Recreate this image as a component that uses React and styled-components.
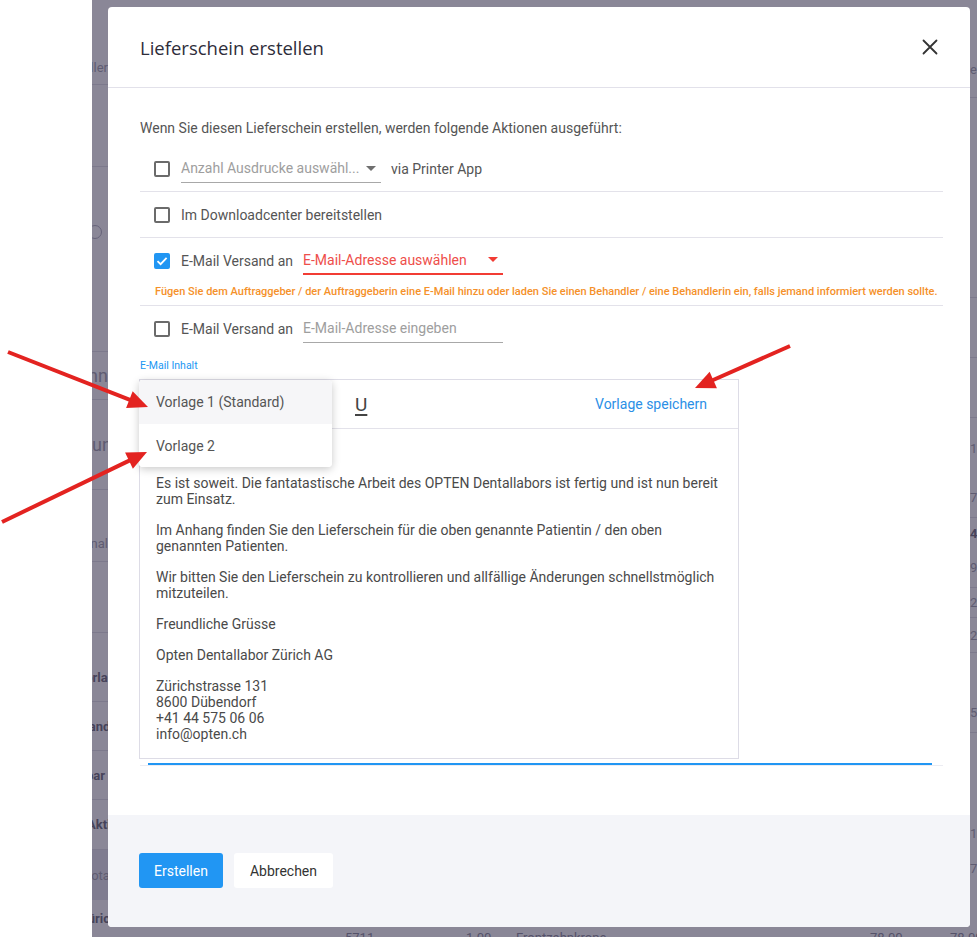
import React from 'react';
import styled, { createGlobalStyle } from 'styled-components';

const GlobalStyle = createGlobalStyle`
  html, body {
    margin: 0;
    padding: 0;
    background: #fff;
  }
  body {
    font-family: Roboto, "Liberation Sans", Arial, sans-serif;
  }
  * {
    box-sizing: border-box;
  }
`;

// bits of the page that lies behind the dimmed overlay, cut by the modal
const leftRows = [
  {h: 51},
  {h: 34, text: 'Besteller', line: true},
  {h: 82, line: true},
  {h: 164, ring: true},
  {h: 21, line: true},
  {h: 48, text: 'Beginn', big: true, line: true},
  {h: 90, text: 'Kunde', big: true, shift: 11, line: true},
  {h: 35},
  {h: 37, text: 'Kanal', line: true},
  {h: 71, line: true},
  {h: 20},
  {h: 49, text: 'Vorlage', bold: true, shift: 15, line: true},
  {h: 49, text: 'Versand', bold: true, shift: 30, line: true},
  {h: 49, text: 'Sichtbar', bold: true, shift: 36, line: true},
  {h: 50, text: 'Aktiv', bold: true, shift: 5, line: true},
  {h: 50, text: 'Total', shift: 8, dark: true},
  {h: 37, text: 'Zürich', bold: true, shift: 12},
];

const rightRows = [
  {h: 60}, {h: 18, text: 'e'}, {h: 20, line: true}, {h: 200, line: true},
  {h: 60, line: true}, {h: 60, line: true}, {h: 60, text: '1'}, {h: 40, text: '7', line: true},
  {h: 30, text: '4', bold: true}, {h: 40, text: '9', line: true}, {h: 30, text: '2', line: true},
  {h: 35, text: '2', line: true}, {h: 40}, {h: 40, text: '5', line: true}, {h: 80},
  {h: 40, text: '1'}, {h: 30, text: '7'}, {h: 54},
];

const Arrow = ({from, tip, head = 20, half = 9}) => {
  const dx = tip[0] - from[0];
  const dy = tip[1] - from[1];
  const len = Math.hypot(dx, dy);
  const ux = dx / len;
  const uy = dy / len;
  const bx = tip[0] - ux * head;
  const by = tip[1] - uy * head;
  const nx = -uy;
  const ny = ux;
  const pts = `${tip[0]},${tip[1]} ${bx + nx * half},${by + ny * half} ${bx - nx * half},${by - ny * half}`;
  return (
    <g>
      <line x1={from[0]} y1={from[1]} x2={bx + ux * 2} y2={by + uy * 2} stroke='#e32320' strokeWidth='4' />
      <polygon points={pts} fill='#e32320' />
    </g>
  );
};

const CloseIcon = () => (
  <svg width='16' height='16' viewBox='0 0 16 16'>
    <path d='M1.5 1.5 L14.5 14.5 M14.5 1.5 L1.5 14.5' stroke='#333' strokeWidth='1.8' strokeLinecap='round' />
  </svg>
);

const CheckMark = () => (
  <svg width='12' height='12' viewBox='0 0 12 12'>
    <path d='M1.5 6.2 L4.6 9.2 L10.6 2.8' stroke='#fff' strokeWidth='1.8' fill='none' />
  </svg>
);

const Checkbox = ({checked = false}) => (
  <Box $checked={checked}>
    {checked && <CheckMark />}
  </Box>
);

const SelectField = ({placeholder, error = false, caret = true}) => (
  <Select $error={error}>
    <span>{placeholder}</span>
    {caret && <Caret $error={error} />}
  </Select>
);

function App() {
  return (
    <Page>
      <GlobalStyle />
      <Gutter />
      <Backdrop>
        <Strip $col={1}>
          {leftRows.map((r, i) => (
            <StripRow key={i} {...{$h: r.h, $line: r.line, $big: r.big, $bold: r.bold, $dark: r.dark, $start: r.shift !== undefined}}>
              {r.ring && <Ring />}
              {r.text && <StripText $shift={r.shift || 0}>{r.text}</StripText>}
            </StripRow>
          ))}
        </Strip>

        <Modal>
          <Header>
            <Title>Lieferschein erstellen</Title>
            <CloseButton><CloseIcon /></CloseButton>
          </Header>

          <Body>
            <Intro>Wenn Sie diesen Lieferschein erstellen, werden folgende Aktionen ausgeführt:</Intro>

            <Row $line>
              <RowMain>
                <Checkbox />
                <SelectField placeholder='Anzahl Ausdrucke auswähl...' />
                <RowLabel>via Printer App</RowLabel>
              </RowMain>
            </Row>

            <Row $line>
              <RowMain>
                <Checkbox />
                <RowLabel>Im Downloadcenter bereitstellen</RowLabel>
              </RowMain>
            </Row>

            <Row $line>
              <RowMain>
                <Checkbox checked />
                <RowLabel>E-Mail Versand an</RowLabel>
                <SelectField placeholder='E-Mail-Adresse auswählen' error />
              </RowMain>
              <Warning>
                Fügen Sie dem Auftraggeber / der Auftraggeberin eine E-Mail hinzu oder laden Sie einen Behandler / eine Behandlerin ein, falls jemand informiert werden sollte.
              </Warning>
            </Row>

            <Row>
              <RowMain>
                <Checkbox />
                <RowLabel>E-Mail Versand an</RowLabel>
                <SelectField placeholder='E-Mail-Adresse eingeben' caret={false} />
              </RowMain>
            </Row>

            <FieldLabel>E-Mail Inhalt</FieldLabel>

            <Editor>
              <Toolbar>
                <UnderlineButton>U</UnderlineButton>
                <SaveLink>Vorlage speichern</SaveLink>
              </Toolbar>

              <Menu>
                <MenuItem $active>Vorlage 1 (Standard)</MenuItem>
                <MenuItem>Vorlage 2</MenuItem>
              </Menu>

              <Content>
                <p>Es ist soweit. Die fantatastische Arbeit des OPTEN Dentallabors ist fertig und ist nun bereit zum Einsatz.</p>
                <p>Im Anhang finden Sie den Lieferschein für die oben genannte Patientin / den oben genannten Patienten.</p>
                <p>Wir bitten Sie den Lieferschein zu kontrollieren und allfällige Änderungen schnellstmöglich mitzuteilen.</p>
                <p>Freundliche Grüsse</p>
                <p>Opten Dentallabor Zürich AG</p>
                <p>
                  Zürichstrasse 131<br />
                  8600 Dübendorf<br />
                  +41 44 575 06 06<br />
                  info@opten.ch
                </p>
              </Content>
            </Editor>

            <FocusLine>
              <FocusBar />
            </FocusLine>
          </Body>

          <Footer>
            <Button $primary>Erstellen</Button>
            <Button>Abbrechen</Button>
          </Footer>
        </Modal>

        <Strip $col={3}>
          {rightRows.map((r, i) => (
            <StripRow key={i} {...{$h: r.h, $line: r.line, $bold: r.bold, $start: true}}>
              {r.text}
            </StripRow>
          ))}
        </Strip>

        <BehindRow>
          <span />
          <span>5711</span>
          <span>1.00</span>
          <span>Frontzahnkrone</span>
          <span>78.00</span>
          <span>78.00</span>
        </BehindRow>
      </Backdrop>

      <Annotations width='977' height='937' viewBox='0 0 977 937'>
        <Arrow from={[8, 352]} tip={[148, 407]} />
        <Arrow from={[2, 522]} tip={[147, 452]} />
        <Arrow from={[790, 346]} tip={[695, 388]} />
      </Annotations>
    </Page>
  );
}

const Page = styled.div`
  position: relative;
  display: flex;
  width: 977px;
  height: 937px;
  overflow: hidden;
`;

const Gutter = styled.div`
  width: 92px;
  flex-shrink: 0;
  background: #fff;
`;

const Backdrop = styled.div`
  flex: 1;
  display: grid;
  grid-template-columns: 16px 862px 1fr;
  grid-template-rows: 7px 920px 1fr;
  background: #8a8797;
  color: #55526a;
  min-width: 0;
`;

const Strip = styled.div`
  grid-column: ${({$col}) => $col};
  grid-row: 1 / 4;
  display: flex;
  flex-direction: column;
  overflow: hidden;
`;

const StripRow = styled.div`
  position: relative;
  height: ${({$h}) => $h}px;
  flex-shrink: 0;
  display: flex;
  align-items: center;
  justify-content: ${({$start}) => $start ? 'flex-start' : 'flex-end'};
  white-space: nowrap;
  font-size: ${({$big}) => $big ? 18 : 13}px;
  font-weight: ${({$bold}) => $bold ? 700 : 400};
  border-bottom: ${({$line}) => $line ? '1px solid #7c798c' : 'none'};
  background: ${({$dark}) => $dark ? '#7f7c90' : 'transparent'};
  color: ${({$bold}) => $bold ? '#46435a' : '#5f5c72'};
`;

const StripText = styled.span`
  flex-shrink: 0;
  margin-left: ${({$shift}) => -$shift}px;
`;

const Ring = styled.span`
  position: absolute;
  left: -4px;
  top: 58px;
  width: 14px;
  height: 14px;
  border-radius: 50%;
  border: 1.5px solid #66637a;
`;

const Modal = styled.div`
  grid-column: 2;
  grid-row: 2;
  display: flex;
  flex-direction: column;
  background: #fff;
  border-radius: 4px;
  overflow: hidden;
`;

const Header = styled.div`
  height: 81px;
  flex-shrink: 0;
  display: flex;
  align-items: center;
  justify-content: space-between;
  padding: 0 30px 0 32px;
  border-bottom: 1px solid #e2e1ea;
`;

const Title = styled.div`
  font-family: "Open Sans", Roboto, sans-serif;
  font-size: 18.5px;
  color: #2e2d3a;
`;

const CloseButton = styled.div`
  display: flex;
  align-items: center;
  justify-content: center;
  width: 20px;
  height: 20px;
`;

const Body = styled.div`
  flex: 1;
  display: flex;
  flex-direction: column;
  padding: 30px 27px 0 32px;
`;

const Intro = styled.div`
  font-size: 14px;
  line-height: 20px;
  color: #555;
  margin-bottom: 8px;
`;

const Row = styled.div`
  display: flex;
  flex-direction: column;
  border-bottom: ${({$line}) => $line ? '1px solid #e3e2ea' : 'none'};
`;

const RowMain = styled.div`
  height: 45px;
  display: flex;
  align-items: center;
  gap: 10px;
  padding-left: 14px;
`;

const RowLabel = styled.span`
  font-size: 14px;
  color: #555;
  white-space: nowrap;
`;

const Box = styled.span`
  width: 16px;
  height: 16px;
  flex-shrink: 0;
  display: inline-flex;
  align-items: center;
  justify-content: center;
  border-radius: 2px;
  border: 2px solid ${({$checked}) => $checked ? '#2196f3' : '#6b6b6b'};
  background: ${({$checked}) => $checked ? '#2196f3' : '#fff'};
  margin-right: 1px;
`;

const Select = styled.div`
  width: 200px;
  height: 28px;
  display: flex;
  align-items: center;
  justify-content: space-between;
  padding-right: 5px;
  font-size: 14px;
  white-space: nowrap;
  color: ${({$error}) => $error ? '#ee4e4a' : '#9e9e9e'};
  border-bottom: ${({$error}) => $error ? '2px solid #f23c34' : '1px solid #a8a8a8'};
`;

const Caret = styled.span`
  width: 0;
  height: 0;
  border-left: 5px solid transparent;
  border-right: 5px solid transparent;
  border-top: 5px solid ${({$error}) => $error ? '#f23c34' : '#6f6f6f'};
`;

const Warning = styled.div`
  font-size: 11px;
  line-height: 14px;
  font-weight: 500;
  color: #f5912a;
  padding: 2px 0 6px 15px;
  white-space: nowrap;
`;

const FieldLabel = styled.div`
  font-size: 10.5px;
  line-height: 12px;
  color: #2196f3;
  margin: 9px 0 7px;
`;

const Editor = styled.div`
  position: relative;
  width: 600px;
  height: 380px;
  margin-left: -1px;
  border: 1px solid #dddce6;
  flex-shrink: 0;
`;

const Toolbar = styled.div`
  height: 49px;
  display: flex;
  align-items: center;
  padding: 0 31px 0 215px;
  border-bottom: 1px solid #e3e2ea;
`;

const UnderlineButton = styled.span`
  font-size: 19px;
  color: #444;
  text-decoration: underline;
  text-underline-offset: 3px;
  text-decoration-thickness: 2px;
`;

const SaveLink = styled.span`
  margin-left: auto;
  font-size: 14px;
  color: #2b8fe6;
`;

const Menu = styled.div`
  position: absolute;
  top: 0;
  left: -1px;
  width: 193px;
  background: #fff;
  border-radius: 4px;
  box-shadow: 0 2px 8px rgba(0, 0, 0, 0.22);
  overflow: hidden;
  z-index: 2;
`;

const MenuItem = styled.div`
  height: ${({$active}) => $active ? 44 : 43}px;
  display: flex;
  align-items: center;
  padding-left: 17px;
  font-size: 14px;
  color: #555;
  background: ${({$active}) => $active ? '#f6f6f8' : '#fff'};
`;

const Content = styled.div`
  padding: 46px 16px 0 16px;
  font-size: 14px;
  line-height: 16px;
  color: #4a4a4a;

  p {
    margin: 0 0 15px;
  }
`;

const FocusLine = styled.div`
  margin-top: 4px;
  height: 3px;
  border-bottom: 1px solid #ececf2;
`;

const FocusBar = styled.div`
  height: 2px;
  margin: 0 11px 0 8px;
  background: #2196f3;
`;

const Footer = styled.div`
  height: 112px;
  flex-shrink: 0;
  display: flex;
  align-items: flex-start;
  gap: 11px;
  padding: 38px 0 0 31px;
  background: #f4f5f9;
`;

const Button = styled.div`
  height: 35px;
  display: flex;
  align-items: center;
  padding: 0 ${({$primary}) => $primary ? 15 : 16}px;
  border-radius: 3px;
  font-size: 14px;
  color: ${({$primary}) => $primary ? '#fff' : '#333'};
  background: ${({$primary}) => $primary ? '#2196f3' : '#fff'};
`;

const BehindRow = styled.div`
  grid-column: 2 / 4;
  grid-row: 3;
  display: grid;
  grid-template-columns: 237px 121px 50px 354px 80px auto;
  padding-top: 3px;
  font-size: 13px;
  line-height: 16px;
  color: #55526a;
  white-space: nowrap;
  overflow: hidden;
`;

const Annotations = styled.svg`
  position: absolute;
  top: 0;
  left: 0;
  pointer-events: none;
  z-index: 10;
`;

export default App;
